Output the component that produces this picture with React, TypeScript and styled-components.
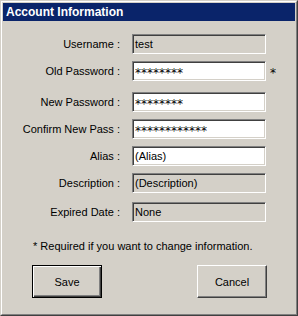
import * as React from 'react';
import styled, { createGlobalStyle } from 'styled-components';

const GlobalStyle = createGlobalStyle`
  html, body {
    margin: 0;
    padding: 0;
    background: #d4d0c8;
  }
  body {
    font-family: 'Liberation Sans', Arial, sans-serif;
    font-size: 11px;
  }
`;

interface IField {
  label: string;
  value: string;
  editable: boolean;
  password?: boolean;
  required?: boolean;
  top: number;
}

const fields: IField[] = [
  { label: 'Username :', value: 'test', editable: false, top: 13 },
  { label: 'Old Password :', value: '********', editable: true, password: true, required: true, top: 7 },
  { label: 'New Password :', value: '********', editable: true, password: true, top: 11 },
  { label: 'Confirm New Pass :', value: '************', editable: true, password: true, top: 7 },
  { label: 'Alias :', value: '(Alias)', editable: true, top: 7 },
  { label: 'Description :', value: '(Description)', editable: false, top: 7 },
  { label: 'Expired Date :', value: 'None', editable: false, top: 9 },
];

export default function App() {
  return (
    <>
      <GlobalStyle />
      <Window>
        <Frame>
          <TitleBar>Account Information</TitleBar>
          <Body>
            {fields.map(({ label, value, editable, password, required, top }) => (
              <Row key={label} $top={top}>
                <Label>{label}</Label>
                <TextBox $editable={editable} $password={!!password}>
                  {value}
                </TextBox>
                {required ? <Star>*</Star> : null}
              </Row>
            ))}
            <Note>* Required if you want to change information.</Note>
            <Buttons>
              <Button $default>Save</Button>
              <Button>Cancel</Button>
            </Buttons>
          </Body>
        </Frame>
      </Window>
    </>
  );
}

const Window = styled.div`
  box-sizing: border-box;
  width: 298px;
  height: 316px;
  border: 1px solid;
  border-color: #d4d0c8 #404040 #404040 #d4d0c8;
  background: #d4d0c8;
`;

const Frame = styled.div`
  box-sizing: border-box;
  height: 100%;
  border: 1px solid;
  border-color: #ffffff #808080 #808080 #ffffff;
  padding: 1px;
  display: flex;
  flex-flow: column nowrap;
`;

const TitleBar = styled.div`
  height: 18px;
  background: #0a246a;
  color: #ffffff;
  font-weight: bold;
  font-size: 12px;
  line-height: 18px;
  padding-left: 3px;
`;

const Body = styled.div`
  flex: 1 1 auto;
  display: flex;
  flex-flow: column nowrap;
`;

const Row = styled.div<{ $top: number }>`
  display: grid;
  grid-template-columns: 117px 134px auto;
  column-gap: 12px;
  align-items: center;
  height: 20px;
  margin-top: ${(p) => p.$top}px;
`;

const Label = styled.span`
  text-align: right;
  color: #000000;
`;

const TextBox = styled.div<{ $editable: boolean; $password: boolean }>`
  box-sizing: border-box;
  height: 20px;
  border-style: solid;
  border-width: 1px;
  border-color: #808080 #ffffff #ffffff #808080;
  box-shadow: inset 1px 1px 0 #404040, inset -1px -1px 0 #d4d0c8;
  background: ${(p) => (p.$editable ? '#ffffff' : '#d4d0c8')};
  padding: 0 3px 0 2px;
  font-family: ${(p) =>
    p.$password ? "'DejaVu Sans', sans-serif" : "'Liberation Sans', Arial, sans-serif"};
  font-size: ${(p) => (p.$password ? '12px' : '11px')};
  line-height: ${(p) => (p.$password ? '22px' : '18px')};
  color: #000000;
  white-space: nowrap;
  overflow: hidden;
`;

const Star = styled.span`
  margin-left: -8px;
  font-family: 'DejaVu Sans', sans-serif;
  font-size: 12px;
  padding-top: 4px;
`;

const Note = styled.div`
  margin-top: 18px;
  padding-left: 30px;
  color: #000000;
`;

const Buttons = styled.div`
  display: flex;
  flex-flow: row nowrap;
  justify-content: space-between;
  padding: 0 28px 0 29px;
  margin-top: 13px;
`;

const Button = styled.button<{ $default?: boolean }>`
  box-sizing: border-box;
  width: 70px;
  height: 33px;
  padding: 0;
  font-family: 'Liberation Sans', Arial, sans-serif;
  font-size: 11px;
  color: #000000;
  background: #d4d0c8;
  border: 1px solid;
  border-color: ${(p) =>
    p.$default ? '#000000' : '#ffffff #404040 #404040 #ffffff'};
  box-shadow: ${(p) =>
    p.$default
      ? 'inset 1px 1px 0 #ffffff, inset -1px -1px 0 #404040, inset -2px -2px 0 #808080'
      : 'inset -1px -1px 0 #808080'};
`;
